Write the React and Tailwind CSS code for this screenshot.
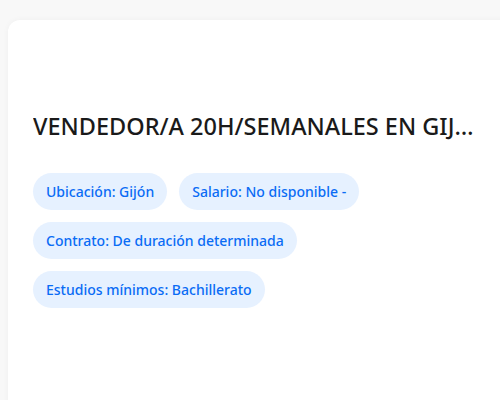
export default function App() {
  const tags = [
    "Ubicación: Gijón",
    "Salario: No disponible -",
    "Contrato: De duración determinada",
    "Estudios mínimos: Bachillerato",
  ];

  return (
    <div className="h-[400px] w-[500px] overflow-hidden bg-[#f8f8f8] pl-2 pt-5 font-['Noto_Sans',sans-serif]">
      <div className="h-[420px] w-[520px] rounded-tl-xl bg-white pl-[25px] pt-[88px] shadow-[0_0_6px_rgba(0,0,0,0.04)]">
        <h1 className="w-[450px] truncate text-[23.5px] font-medium leading-[36px] text-[#1a1a1a]">
          VENDEDOR/A 20H/SEMANALES EN GIJÓN - CENTRO
        </h1>
        <div className="mt-[29px] flex w-[445px] flex-wrap gap-3">
          {tags.map((t) => (
            <span
              key={t}
              className="flex h-[37px] items-center rounded-full bg-[#e6f1ff] px-[13px] text-[14px] font-medium text-[#0a6cf5]"
            >
              {t}
            </span>
          ))}
        </div>
      </div>
    </div>
  );
}
